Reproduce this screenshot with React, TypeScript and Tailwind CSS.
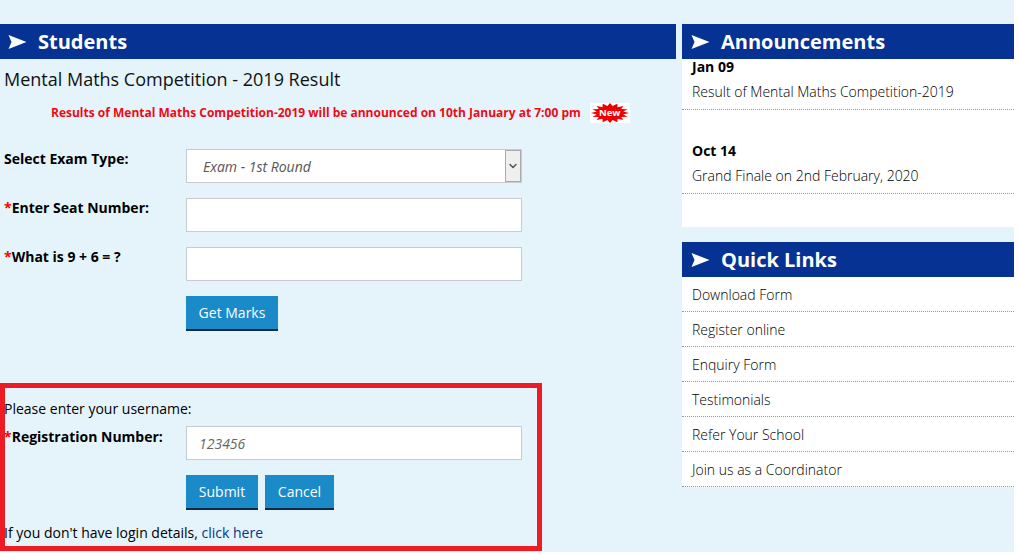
import { ChevronDown } from 'lucide-react'

const font = { fontFamily: '"Open Sans", sans-serif' }

const Arrow = () => (
  <svg width="20" height="15" viewBox="0 0 20 15" className="shrink-0">
    <polygon points="0.5,1 18.5,8 0.5,15 3.5,8" fill="#ffffff" />
  </svg>
)

const Header = ({ title, className }: { title: string; className: string }) => (
  <div className={`flex h-[35px] items-center bg-[#063293] text-[20px] font-bold text-white ${className}`}>
    <Arrow />
    <span className="ml-[10px]">{title}</span>
  </div>
)

const Star = () => <span className="text-[#ff0000]">*</span>

const Label = ({ required, children, className }: { required?: boolean; children: React.ReactNode; className?: string }) => (
  <label className={`w-[182px] shrink-0 text-[14px] leading-[18px] font-bold text-black ${className ?? 'pt-[1px]'}`}>
    {required && <Star />}
    {children}
  </label>
)

const TextInput = ({ placeholder }: { placeholder?: string }) => (
  <input
    placeholder={placeholder}
    className="h-[34px] w-[336px] border border-[#c8cccf] bg-white px-3 text-[14px] italic outline-none placeholder:text-[#666]"
  />
)

const Btn = ({ children, className }: { children: React.ReactNode; className: string }) => (
  <button className={`h-[35px] border-b-2 border-[#0a2a40] bg-[#1a8ac9] text-[14px] text-white ${className}`}>
    {children}
  </button>
)

// starburst for the "New" tag
const burstPoints = Array.from({ length: 32 }, (_, i) => {
  const a = (i / 32) * Math.PI * 2
  const rx = i % 2 === 0 ? 19 : 13.5
  const ry = i % 2 === 0 ? 10 : 7
  return `${(20 + rx * Math.cos(a)).toFixed(1)},${(10 + ry * Math.sin(a)).toFixed(1)}`
}).join(' ')

const NewTag = () => (
  <span className="relative ml-[9px] inline-block h-[20px] w-[40px] bg-white">
    <svg width="40" height="20" viewBox="0 0 40 20" className="block">
      <polygon points={burstPoints} fill="#f00000" />
    </svg>
    <span className="absolute inset-0 flex items-center justify-center text-[9.5px] leading-none font-bold text-white">
      New
    </span>
  </span>
)

const links = ['Download Form', 'Register online', 'Enquiry Form', 'Testimonials', 'Refer Your School', 'Join us as a Coordinator']

const announcements = [
  { date: 'Jan 09', text: 'Result of Mental Maths Competition-2019' },
  { date: 'Oct 14', text: 'Grand Finale on 2nd February, 2020' },
]

export default function App() {
  return (
    <div className="h-[555px] w-[1020px] overflow-hidden bg-white" style={font}>
      <div className="relative flex h-[552px] w-[1014px] gap-[6px] bg-[#e5f4fb] pt-[24px]">
        {/* left column */}
        <div className="w-[676px] shrink-0">
          <Header title="Students" className="pl-[8px]" />
          <h2 className="mt-[7px] pl-[4px] text-[18px] leading-[26px] text-[#111]">Mental Maths Competition - 2019 Result</h2>
          <div className="mt-[11px] flex h-[20px] items-center pl-[51px] text-[12px] font-bold text-[#ee0a14]">
            Results of Mental Maths Competition-2019 will be announced on 10th January at 7:00 pm
            <NewTag />
          </div>

          <div className="mt-[26px] flex pl-[4px]">
            <Label>Select Exam Type:</Label>
            <div className="relative h-[34px] w-[336px]">
              <select className="h-full w-full appearance-none border border-[#c8cccf] bg-white pl-[16px] text-[14px] text-[#555] italic outline-none">
                <option>Exam - 1st Round</option>
              </select>
              <span className="absolute top-[1px] right-[1px] flex h-[32px] w-[16px] items-center justify-center border border-[#aaa] bg-[#efefef]">
                <ChevronDown size={12} strokeWidth={3} className="text-[#555]" />
              </span>
            </div>
          </div>

          <div className="mt-[15px] flex pl-[4px]">
            <Label required>Enter Seat Number:</Label>
            <TextInput />
          </div>
          <div className="mt-[15px] flex pl-[4px]">
            <Label required>What is 9 + 6 = ?</Label>
            <TextInput />
          </div>
          <div className="mt-[15px] pl-[186px]">
            <Btn className="w-[92px]">Get Marks</Btn>
          </div>

          <p className="mt-[68px] pl-[4px] text-[14px] leading-[20px] text-black">Please enter your username:</p>
          <div className="mt-[7px] flex pl-[4px]">
            <Label required className="pt-[2px]">Registration Number:</Label>
            <TextInput placeholder="123456" />
          </div>
          <div className="mt-[15px] flex gap-[7px] pl-[186px]">
            <Btn className="w-[72px]">Submit</Btn>
            <Btn className="w-[69px]">Cancel</Btn>
          </div>
          <p className="mt-[13px] pl-[4px] text-[14px] leading-[20px] text-black">
            If you don't have login details, <a className="text-[#063293]">click here</a>
          </p>
        </div>

        {/* right column */}
        <div className="w-[332px] shrink-0">
          <Header title="Announcements" className="pl-[9px]" />
          <div className="h-[168px] bg-white text-[14px] text-black">
            {announcements.map((a, i) => (
              <div key={a.date} className={`border-b border-dotted border-[#999] px-[10px] ${i === 0 ? 'h-[51px]' : 'mt-[31px] h-[53px] pt-[2px]'}`}>
                <div className="leading-[15px] font-bold">{a.date}</div>
                <div className="mt-[9px] leading-[18px] font-light">{a.text}</div>
              </div>
            ))}
          </div>

          <div className="mt-[15px]">
            <Header title="Quick Links" className="pl-[9px]" />
            <ul className="bg-white text-[14px] font-light text-black">
              {links.map((l) => (
                <li key={l} className="flex h-[35px] items-center border-b border-dotted border-[#999] px-[10px]">
                  {l}
                </li>
              ))}
            </ul>
          </div>
        </div>

        {/* red annotation drawn over the form */}
        <div className="pointer-events-none absolute top-[383px] left-0 h-[168px] w-[542px] border-[5px] border-[#ed1c24]" />
      </div>
    </div>
  )
}
